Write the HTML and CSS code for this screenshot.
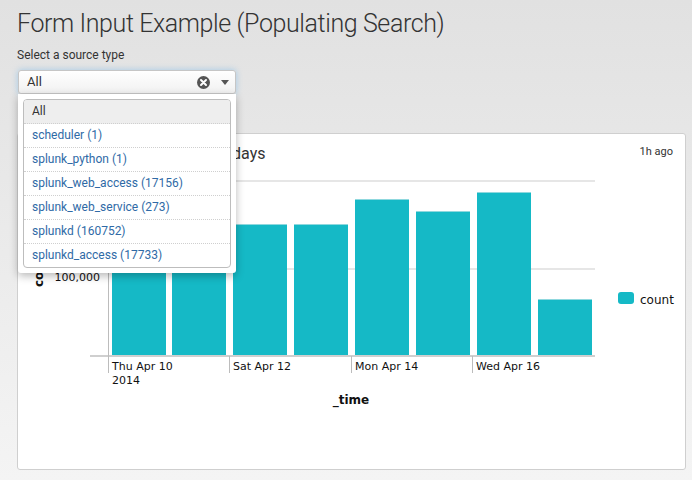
FILE: index.html
```html
<!DOCTYPE html>
<html>
<head>
<meta charset="utf-8">
<title>Form Input Example</title>
<link rel="stylesheet" href="styles.css">
</head>
<body>
<div class="page">
  <h1 class="title">Form Input Example (Populating Search)</h1>
  <div class="field">
    <label class="field-label">Select a source type</label>
    <div class="select">
      <span class="select-value">All</span>
      <svg class="icon-clear" width="13" height="13" viewBox="0 0 13 13"><circle cx="6.5" cy="6.5" r="6.5" fill="#555"/><path d="M4 4 L9 9 M9 4 L4 9" stroke="#fff" stroke-width="2" stroke-linecap="round"/></svg>
      <svg class="icon-caret" width="8" height="5" viewBox="0 0 8 5"><path d="M0 0 H8 L4 5 Z" fill="#555"/></svg>
      <div class="dropdown">
        <ul class="options">
          <li class="option active">All</li>
          <li class="option">scheduler (1)</li>
          <li class="option">splunk_python (1)</li>
          <li class="option">splunk_web_access (17156)</li>
          <li class="option">splunk_web_service (273)</li>
          <li class="option">splunkd (160752)</li>
          <li class="option">splunkd_access (17733)</li>
        </ul>
      </div>
    </div>
  </div>
  <section class="panel">
    <header class="panel-head">
      <h2 class="panel-title">Count of events in the last 7 days</h2>
      <span class="panel-time">1h ago</span>
    </header>
    <svg class="chart" width="666" height="250" viewBox="0 0 666 250">
      <g class="grid">
        <line x1="90" y1="11" x2="577" y2="11"/>
        <line x1="90" y1="99" x2="577" y2="99"/>
      </g>
      <g class="bars">
        <rect x="94" y="58" width="54" height="127"/>
        <rect x="154" y="56" width="54" height="129"/>
        <rect x="215" y="54" width="54" height="131"/>
        <rect x="276" y="54" width="54" height="131"/>
        <rect x="337" y="29" width="54" height="156"/>
        <rect x="398" y="41" width="54" height="144"/>
        <rect x="459" y="22" width="54" height="163"/>
        <rect x="520" y="129" width="54" height="56"/>
      </g>
      <g class="bar-tops">
        <rect x="94" y="58" width="54" height="1"/>
        <rect x="154" y="56" width="54" height="1"/>
        <rect x="215" y="54" width="54" height="1"/>
        <rect x="276" y="54" width="54" height="1"/>
        <rect x="337" y="29" width="54" height="1"/>
        <rect x="398" y="41" width="54" height="1"/>
        <rect x="459" y="22" width="54" height="1"/>
        <rect x="520" y="129" width="54" height="1"/>
      </g>
      <line class="axis" x1="72" y1="186" x2="577" y2="186"/>
      <g class="ticks">
        <line x1="90.5" y1="11" x2="90.5" y2="203"/>
        <line x1="211.5" y1="186" x2="211.5" y2="203"/>
        <line x1="333.5" y1="186" x2="333.5" y2="203"/>
        <line x1="454.5" y1="186" x2="454.5" y2="203"/>
      </g>
      <g class="tick-labels">
        <text x="94" y="200">Thu Apr 10</text>
        <text x="94" y="214">2014</text>
        <text x="215" y="200">Sat Apr 12</text>
        <text x="337" y="200">Mon Apr 14</text>
        <text x="458" y="200">Wed Apr 16</text>
        <text x="82" y="111" text-anchor="end">100,000</text>
      </g>
      <text class="axis-title" transform="translate(25,98) rotate(-90)" text-anchor="middle">count</text>
      <text class="axis-title" x="333" y="234" text-anchor="middle">_time</text>
      <rect class="legend-swatch" x="600" y="122" width="16" height="12" rx="3"/>
      <text class="legend-label" x="622" y="134">count</text>
    </svg>
  </section>
</div>
</body>
</html>
```

FILE: styles.css
```css
html, body {
  margin: 0;
  padding: 0;
}
body {
  width: 692px;
  height: 480px;
  overflow: hidden;
  background: linear-gradient(#e1e1e1, #f4f4f4);
  font-family: Roboto, "Noto Sans", sans-serif;
  color: #333;
}
.page {
  padding: 0 6px 0 17px;
}
.title {
  margin: 0;
  padding-top: 8px;
  font-size: 25px;
  letter-spacing: -0.4px;
  line-height: 32px;
  font-weight: 300;
  color: #333;
}
.field {
  display: flex;
  flex-direction: column;
  align-items: flex-start;
}
.field-label {
  margin-top: 7px;
  font-size: 12px;
  line-height: 16px;
  color: #333;
}
.select {
  position: relative;
  margin-top: 7px;
  margin-left: 1px;
  width: 218px;
  height: 24px;
  box-sizing: border-box;
  display: flex;
  align-items: center;
  padding: 0 6px 0 8px;
  border: 1px solid #c6c6c6;
  border-radius: 3px;
  background: linear-gradient(#ffffff, #f1f1f1);
  box-shadow: 0 0 6px rgba(82, 168, 236, 0.45);
  font-size: 13px;
  line-height: 22px;
  color: #333;
}
.select-value {
  flex: 1;
}
.icon-clear {
  display: block;
  margin-right: 11px;
}
.icon-caret {
  display: block;
}
.dropdown {
  position: absolute;
  left: -1px;
  top: 23px;
  width: 218px;
  box-sizing: border-box;
  padding: 5px;
  background: #fff;
  border-radius: 0 0 3px 3px;
  box-shadow: 0 3px 8px rgba(0, 0, 0, 0.28);
  z-index: 5;
}
.options {
  list-style: none;
  margin: 0;
  padding: 0;
  border: 1px solid #bdbdbd;
  border-radius: 4px;
  overflow: hidden;
}
.option {
  height: 23px;
  line-height: 23px;
  padding-left: 8px;
  font-size: 12px;
  color: #2f6aa6;
  border-bottom: 1px dotted #cfcfcf;
}
.option:last-child {
  border-bottom: none;
}
.option.active {
  background: #eeeeee;
  color: #333;
}
.panel {
  margin-top: 39px;
  height: 337px;
  box-sizing: border-box;
  background: #fff;
  border: 1px solid #cfcfcf;
  border-radius: 3px;
  padding-top: 10px;
}
.panel-head {
  display: flex;
  justify-content: space-between;
  align-items: flex-start;
  padding: 0 12px 0 12px;
}
.panel-title {
  margin: 0;
  font-size: 16px;
  line-height: 20px;
  font-weight: 400;
  color: #333;
}
.panel-time {
  font-size: 11px;
  line-height: 16px;
  color: #333;
}
.chart {
  display: block;
  margin-top: 6px;
  font-family: "DejaVu Sans", sans-serif;
}
.grid line {
  stroke: #e6e6e6;
  stroke-width: 2;
}
.bars rect {
  fill: #15b9c6;
}
.bar-tops rect {
  fill: #8fd8de;
}
.axis {
  stroke: #cfcfcf;
  stroke-width: 2;
}
.ticks line {
  stroke: #bcbcbc;
  stroke-width: 1;
}
.tick-labels text {
  font-size: 11px;
  fill: #111;
}
.axis-title {
  font-size: 12px;
  font-weight: bold;
  fill: #111;
}
.legend-swatch {
  fill: #15b9c6;
}
.legend-label {
  font-size: 12px;
  fill: #111;
}
```
